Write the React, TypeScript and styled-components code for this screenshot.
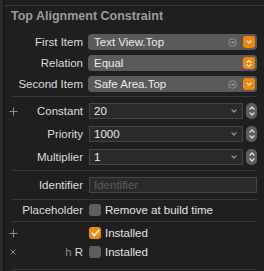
import React from 'react';
import styled, { createGlobalStyle } from 'styled-components';

const GlobalStyle = createGlobalStyle`
  html, body {
    margin: 0;
    padding: 0;
    background: #1f1f1f;
  }
  body {
    font-family: "Liberation Sans", Arial, sans-serif;
    -webkit-font-smoothing: antialiased;
  }
`;

const Frame = styled.div`
  display: flex;
  width: 264px;
  height: 271px;
  background: #1f1f1f;
  overflow: hidden;
`;

const LeftStrip = styled.div`
  flex: 0 0 3px;
  background: #2a2a2a;
  border-right: 1px solid #121212;
`;

const Panel = styled.div`
  flex: 1;
  min-width: 0;
  display: flex;
  flex-direction: column;
  padding-top: 5px;
`;

const TopRule = styled.div`
  height: 1px;
  background: #383838;
`;

const Title = styled.div`
  height: 16px;
  line-height: 16px;
  margin-top: 2px;
  padding-left: 7px;
  font-size: 12.5px;
  font-weight: bold;
  color: #9b9b9b;
`;

const Group = styled.div<{ $top: number; $bottom: number; $gap: number }>`
  display: flex;
  flex-direction: column;
  gap: ${(p) => p.$gap}px;
  padding-top: ${(p) => p.$top}px;
  padding-bottom: ${(p) => p.$bottom}px;
`;

const Divider = styled.div`
  height: 1px;
  margin: 0 7px 0 8px;
  background: #363636;
`;

const Row = styled.div`
  display: grid;
  grid-template-columns: 18px 56px minmax(0, 1fr);
  column-gap: 5px;
  align-items: center;
  height: 16px;
  padding-right: 7px;
`;

const Gutter = styled.div`
  display: flex;
  justify-content: center;
  align-items: center;
  color: #8e8e8e;
`;

const Label = styled.div`
  display: flex;
  justify-content: flex-end;
  font-size: 11.5px;
  color: #dcdcdc;
  white-space: nowrap;
`;

const Dim = styled.span`
  color: #8a8a8a;
  margin-right: 3px;
`;

const Popup = styled.div`
  display: flex;
  align-items: center;
  height: 16px;
  border-radius: 4px;
  background: #5a5a5c;
  padding: 0 2px 0 6px;
  box-sizing: border-box;
  font-size: 11.5px;
  color: #ececec;
`;

const PopupText = styled.span`
  flex: 1;
`;

const GoIcon = styled.svg`
  margin-right: 6px;
`;

const OrangeButton = styled.div`
  width: 12px;
  height: 12px;
  border-radius: 3px;
  background: #f0870c;
  display: flex;
  align-items: center;
  justify-content: center;
`;

const FieldWrap = styled.div`
  display: flex;
  align-items: center;
  gap: 3px;
`;

const Field = styled.div<{ $placeholder?: boolean }>`
  flex: 1;
  display: flex;
  align-items: center;
  height: 16px;
  box-sizing: border-box;
  border: 1px solid #454545;
  background: #2a2a2a;
  padding: 0 5px 0 4px;
  margin-left: 1px;
  font-size: 11.5px;
  color: ${(p) => (p.$placeholder ? '#5c5c5c' : '#ececec')};
`;

const Stepper = styled.div`
  width: 11px;
  height: 16px;
  border-radius: 5px;
  background: #5e5e5e;
  display: flex;
  flex-direction: column;
  align-items: center;
  justify-content: center;
  gap: 2px;
`;

const CheckRow = styled.div`
  display: flex;
  align-items: center;
  gap: 4px;
  padding-left: 1px;
  font-size: 11.5px;
  color: #e2e2e2;
`;

const Box = styled.div<{ $checked?: boolean }>`
  width: 12px;
  height: 12px;
  border-radius: 3px;
  background: ${(p) => (p.$checked ? '#f0870c' : '#5e5e5e')};
  display: flex;
  align-items: center;
  justify-content: center;
`;

const Chevron = ({ up, color = '#fff', w = 6 }: { up?: boolean; color?: string; w?: number }) => (
  <svg width={w} height={4} viewBox="0 0 6 4">
    <path
      d={up ? 'M1 3.2 L3 1 L5 3.2' : 'M1 0.8 L3 3 L5 0.8'}
      fill="none"
      stroke={color}
      strokeWidth={1.2}
      strokeLinecap="round"
      strokeLinejoin="round"
    />
  </svg>
);

const Plus = () => (
  <svg width={9} height={9} viewBox="0 0 9 9">
    <path d="M4.5 0.5 V8.5 M0.5 4.5 H8.5" stroke="#8e8e8e" strokeWidth={1} />
  </svg>
);

const Cross = () => (
  <svg width={6} height={6} viewBox="0 0 6 6">
    <path d="M0.5 0.5 L5.5 5.5 M5.5 0.5 L0.5 5.5" stroke="#8e8e8e" strokeWidth={1} />
  </svg>
);

const PopupField = ({ value, arrow }: { value: string; arrow?: boolean }) => (
  <Popup>
    <PopupText>{value}</PopupText>
    {arrow && (
      <GoIcon width={9} height={9} viewBox="0 0 9 9">
        <circle cx={4.5} cy={4.5} r={3.8} fill="none" stroke="#9a9a9a" strokeWidth={0.9} />
        <path d="M2.4 4.5 H6.2 M4.6 2.9 L6.2 4.5 L4.6 6.1" fill="none" stroke="#9a9a9a" strokeWidth={0.9} />
      </GoIcon>
    )}
    <OrangeButton>
      {arrow ? (
        <Chevron />
      ) : (
        <svg width={6} height={9} viewBox="0 0 6 9">
          <path d="M1 3.4 L3 1.4 L5 3.4 M1 5.6 L3 7.6 L5 5.6" fill="none" stroke="#fff" strokeWidth={1.2} strokeLinecap="round" strokeLinejoin="round" />
        </svg>
      )}
    </OrangeButton>
  </Popup>
);

const NumberField = ({ value }: { value: string }) => (
  <FieldWrap>
    <Field>
      <PopupText>{value}</PopupText>
      <Chevron color="#9a9a9a" />
    </Field>
    <Stepper>
      <Chevron up color="#e8e8e8" />
      <Chevron color="#e8e8e8" />
    </Stepper>
  </FieldWrap>
);

const CheckMark = () => (
  <svg width={9} height={8} viewBox="0 0 9 8">
    <path d="M1.2 4.2 L3.5 6.6 L7.8 1.2" fill="none" stroke="#fff" strokeWidth={1.6} strokeLinecap="round" strokeLinejoin="round" />
  </svg>
);

export default function App() {
  return (
    <>
      <GlobalStyle />
      <Frame>
        <LeftStrip />
        <Panel>
          <TopRule />
          <Title>Top Alignment Constraint</Title>

          <Group $top={10} $bottom={4} $gap={5}>
            <Row>
              <Gutter />
              <Label>First Item</Label>
              <PopupField value="Text View.Top" arrow />
            </Row>
            <Row>
              <Gutter />
              <Label>Relation</Label>
              <PopupField value="Equal" />
            </Row>
            <Row>
              <Gutter />
              <Label>Second Item</Label>
              <PopupField value="Safe Area.Top" arrow />
            </Row>
          </Group>
          <Divider />

          <Group $top={6} $bottom={5} $gap={7}>
            <Row>
              <Gutter>
                <Plus />
              </Gutter>
              <Label>Constant</Label>
              <NumberField value="20" />
            </Row>
            <Row>
              <Gutter />
              <Label>Priority</Label>
              <NumberField value="1000" />
            </Row>
            <Row>
              <Gutter />
              <Label>Multiplier</Label>
              <NumberField value="1" />
            </Row>
          </Group>
          <Divider />

          <Group $top={6} $bottom={6} $gap={0}>
            <Row>
              <Gutter />
              <Label>Identifier</Label>
              <Field $placeholder>Identifier</Field>
            </Row>
          </Group>
          <Divider />

          <Group $top={2} $bottom={3} $gap={0}>
            <Row>
              <Gutter />
              <Label>Placeholder</Label>
              <CheckRow>
                <Box />
                Remove at build time
              </CheckRow>
            </Row>
          </Group>
          <Divider />

          <Group $top={3} $bottom={9} $gap={3}>
            <Row>
              <Gutter>
                <Plus />
              </Gutter>
              <Label />
              <CheckRow>
                <Box $checked>
                  <CheckMark />
                </Box>
                Installed
              </CheckRow>
            </Row>
            <Row>
              <Gutter>
                <Cross />
              </Gutter>
              <Label>
                <Dim>h</Dim>R
              </Label>
              <CheckRow>
                <Box />
                Installed
              </CheckRow>
            </Row>
          </Group>
          <Divider />
        </Panel>
      </Frame>
    </>
  );
}
